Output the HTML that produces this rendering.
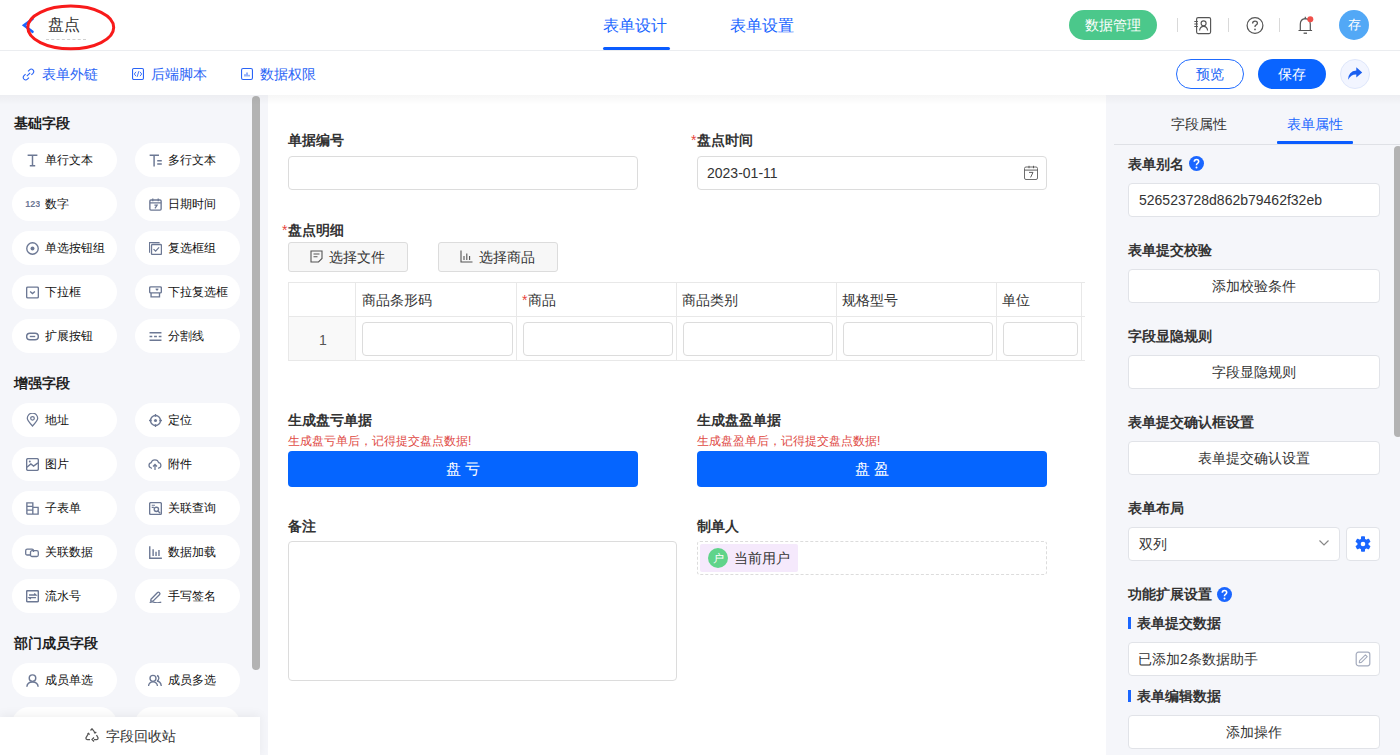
<!DOCTYPE html>
<html><head><meta charset="utf-8">
<style>
*{box-sizing:border-box;margin:0;padding:0}
html,body{width:1400px;height:755px;overflow:hidden;background:#fff;font-family:"Liberation Sans",sans-serif;color:#333}
.abs{position:absolute}
.t{position:absolute;white-space:nowrap;line-height:1}
/* header */
#hdr{position:absolute;left:0;top:0;width:1400px;height:51px;border-bottom:1px solid #ebedf0;background:#fff}
#tb{position:absolute;left:0;top:51px;width:1400px;height:44px;background:#fff}
#left{position:absolute;left:0;top:96px;width:268px;height:659px;background:#f5f6fa}
#center{position:absolute;left:268px;top:96px;width:838px;height:659px;background:#fff}
#right{position:absolute;left:1106px;top:96px;width:294px;height:659px;background:#f5f6fa}
#shadow{position:absolute;left:0;top:95px;width:1400px;height:10px;background:linear-gradient(rgba(0,0,0,0.035),rgba(0,0,0,0))}
.pill{position:absolute;width:105px;height:34px;border-radius:17px;background:#fff}
.pill .ic{position:absolute;left:14px;top:10.5px;width:13px;height:13px}
.pill span{position:absolute;left:33px;top:11px;font-size:12px;line-height:13px;color:#111;white-space:nowrap}
.sec{position:absolute;left:14px;font-size:14px;font-weight:bold;color:#1f1f1f;line-height:14px}
.lbl{position:absolute;font-size:14px;font-weight:bold;color:#333;line-height:14px;white-space:nowrap}
.req{color:#e8453c;font-weight:normal;padding-right:1px}
.inp{position:absolute;border:1px solid #dcdcdc;border-radius:4px;background:#fff}
.rlbl{position:absolute;left:1128px;font-size:14px;font-weight:bold;color:#333;line-height:14px;white-space:nowrap}
.rbtn{position:absolute;left:1128px;width:252px;height:34px;border:1px solid #e1e3e8;border-radius:4px;background:#fff;font-size:14px;color:#333;text-align:center;line-height:32px}
</style></head>
<body>
<div id="hdr">
<svg class="abs" style="left:21px;top:17px" width="14" height="17" viewBox="0 0 14 17"><path d="M11.5 2 L3 8.3 L11.5 14.8" fill="none" stroke="#1a66ff" stroke-width="2.6" stroke-linecap="round"/></svg>
<div class="t" style="left:48px;top:17px;font-size:16px;color:#333">盘点</div>
<div class="abs" style="left:46px;top:39px;width:40px;border-top:1px dashed #d0d0d0"></div>
<svg class="abs" style="left:20px;top:0px" width="100" height="54" viewBox="0 0 100 54"><ellipse cx="50.75" cy="27.45" rx="42.95" ry="21.35" fill="none" stroke="#f81a1a" stroke-width="3"/></svg>
<div class="t" style="left:603px;top:18px;font-size:16px;color:#1a66ff">表单设计</div>
<div class="abs" style="left:603px;top:47px;width:67px;height:3px;border-radius:2px;background:#0a5cff"></div>
<div class="t" style="left:730px;top:18px;font-size:16px;color:#1a66ff">表单设置</div>
<div class="abs" style="left:1069px;top:10px;width:88px;height:30px;border-radius:15px;background:#4bc88b;color:#fff;font-size:14px;line-height:30px;text-align:center">数据管理</div>
<div class="abs" style="left:1177px;top:18px;width:1px;height:14px;background:#d9d9d9"></div>
<div class="abs" style="left:1228px;top:18px;width:1px;height:14px;background:#d9d9d9"></div>
<div class="abs" style="left:1279px;top:18px;width:1px;height:14px;background:#d9d9d9"></div>
<svg class="abs" style="left:1193px;top:16px" width="19" height="19" viewBox="0 0 19 19"><rect x="3.6" y="1.6" width="14" height="16" rx="1.5" fill="none" stroke="#555" stroke-width="1.15"/><circle cx="10.6" cy="7.3" r="2.5" fill="none" stroke="#555" stroke-width="1.15"/><path d="M6.6 14.5 Q7 10.3 10.6 10.3 Q14.2 10.3 14.6 14.5" fill="none" stroke="#555" stroke-width="1.15"/><path d="M1.3 5.5h3.6M1.3 8h3.6M1.3 10.5h3.6" stroke="#555" stroke-width="1.1"/></svg>
<svg class="abs" style="left:1245px;top:16px" width="20" height="20" viewBox="0 0 20 20"><circle cx="10" cy="9.5" r="7.9" fill="none" stroke="#555" stroke-width="1.2"/><path d="M7.6 7.5 Q7.6 5.2 10 5.2 Q12.4 5.2 12.4 7.3 Q12.4 8.7 10.6 9.4 Q10 9.7 10 10.9" fill="none" stroke="#555" stroke-width="1.3"/><circle cx="10" cy="13.4" r="0.85" fill="#555"/></svg>
<svg class="abs" style="left:1296px;top:15px" width="20" height="21" viewBox="0 0 20 21"><path d="M4.3 15.5 L4.3 9.3 Q4.3 4 9.3 3.6 Q14.3 4 14.3 9.3 L14.3 15.5 Z M2.5 15.5 H16.1" fill="none" stroke="#555" stroke-width="1.2" stroke-linejoin="round"/><path d="M7.6 18.2 H11" stroke="#555" stroke-width="1.3"/><path d="M9.3 1.8 V3.6" stroke="#555" stroke-width="1.2"/><circle cx="14.3" cy="4.2" r="3" fill="#f0504a"/></svg>
<div class="abs" style="left:1339px;top:10px;width:30px;height:30px;border-radius:15px;background:#52a8f6;color:#fff;font-size:13px;line-height:30px;text-align:center">存</div>
</div>
<div id="tb">
<svg class="abs" style="left:22px;top:17px" width="13" height="13" viewBox="0 0 13 13"><path d="M4.8 8.2 L8.2 4.8" stroke="#2a64f6" stroke-width="1.1"/><path d="M6 3.4 L7.6 1.8 Q9.3 0.2 11 1.9 Q12.6 3.6 11 5.3 L9.4 6.9 M7 9.6 L5.4 11.2 Q3.7 12.8 2 11.1 Q0.4 9.4 2 7.7 L3.6 6.1" fill="none" stroke="#2a64f6" stroke-width="1.1"/></svg>
<div class="t" style="left:42px;top:16px;font-size:14px;color:#2a64f6">表单外链</div>
<svg class="abs" style="left:132px;top:17px" width="12" height="12" viewBox="0 0 12 12"><rect x="0.55" y="0.55" width="10.9" height="10.9" rx="1.2" fill="none" stroke="#2a64f6" stroke-width="1.1"/><path d="M4 3.8 L2.3 6 L4 8.2 M8 3.8 L9.7 6 L8 8.2 M6.8 3.2 L5.2 8.8" fill="none" stroke="#2a64f6" stroke-width="0.9"/></svg>
<div class="t" style="left:151px;top:16px;font-size:14px;color:#2a64f6">后端脚本</div>
<svg class="abs" style="left:241px;top:17px" width="12" height="12" viewBox="0 0 12 12"><rect x="0.55" y="0.55" width="10.9" height="10.9" rx="1.5" fill="none" stroke="#2a64f6" stroke-width="1.1"/><path d="M4 8.5 V6.2 M6 8.5 V4.5 M8 8.5 V6.8" fill="none" stroke="#2a64f6" stroke-width="1"/></svg>
<div class="t" style="left:260px;top:16px;font-size:14px;color:#2a64f6">数据权限</div>
<div class="abs" style="left:1176px;top:8px;width:68px;height:30px;border-radius:15px;border:1px solid #1f6bff;color:#2064f5;font-size:14px;line-height:28px;text-align:center">预览</div>
<div class="abs" style="left:1258px;top:8px;width:68px;height:30px;border-radius:15px;background:#0a64ff;color:#fff;font-size:14px;line-height:30px;text-align:center">保存</div>
<div class="abs" style="left:1340px;top:8px;width:30px;height:30px;border-radius:15px;background:#f2f5ff;border:1px solid #dfe7fb"></div>
<svg class="abs" style="left:1347px;top:15px" width="16" height="15" viewBox="0 0 16 15"><path d="M9.3 1.2 L15.2 6.6 L9.3 11.6 V8.6 Q4.2 8.3 1 13.8 Q1.4 5 9.3 4.4 Z" fill="#1a5ff0"/></svg>
</div>
<div id="left">
<div class="sec" style="top:20px">基础字段</div>
<div class="pill" style="left:12px;top:47px"><svg class="ic" viewBox="0 0 12 12"><path d="M1.5 1.2h9M6 1.2v9.6M3.5 10.8h5" fill="none" stroke="#6c7894" stroke-width="1.35"/></svg><span>单行文本</span></div>
<div class="pill" style="left:135px;top:47px"><svg class="ic" viewBox="0 0 12 12"><path d="M0.6 1.1h8.6M4.7 1.1v10.4M7.6 6.3h4.2M7.6 9.3h4.2" fill="none" stroke="#6c7894" stroke-width="1.35"/></svg><span>多行文本</span></div>
<div class="pill" style="left:12px;top:91px"><svg class="ic" style="width:16px;left:12px" viewBox="0 0 16 12"><text x="1.3" y="8" font-size="9" font-weight="bold" fill="#6c7894" font-family="Liberation Sans" textLength="15" lengthAdjust="spacingAndGlyphs">123</text></svg><span>数字</span></div>
<div class="pill" style="left:135px;top:91px"><svg class="ic" viewBox="0 0 12 12"><rect x="0.8" y="1.8" width="10.4" height="9.4" rx="1" fill="none" stroke="#6c7894" stroke-width="1.25"/><path d="M0.8 4.5h10.4M3.5 0.5v2.5M8.5 0.5v2.5M5 6.5h2.5L5.5 9.5" fill="none" stroke="#6c7894" stroke-width="1.15"/></svg><span>日期时间</span></div>
<div class="pill" style="left:12px;top:135px"><svg class="ic" viewBox="0 0 12 12"><circle cx="6" cy="6" r="5.3" fill="none" stroke="#6c7894" stroke-width="1.25"/><circle cx="6" cy="6" r="1.8" fill="#6c7894"/></svg><span>单选按钮组</span></div>
<div class="pill" style="left:135px;top:135px"><svg class="ic" viewBox="0 0 12 12"><path d="M0.3 10V0.5H9.8" fill="none" stroke="#6c7894" stroke-width="1.25"/><rect x="2.3" y="2.3" width="9.2" height="9.2" rx="1" fill="none" stroke="#6c7894" stroke-width="1.25"/><path d="M4.2 6.6l1.9 1.8 3.2-3.4" fill="none" stroke="#6c7894" stroke-width="1.2"/></svg><span>复选框组</span></div>
<div class="pill" style="left:12px;top:179px"><svg class="ic" viewBox="0 0 12 12"><rect x="0.6" y="1.1" width="10.8" height="9.8" rx="1" fill="none" stroke="#6c7894" stroke-width="1.25"/><path d="M3.8 5l2.2 2 2.2-2" fill="none" stroke="#6c7894" stroke-width="1.25"/></svg><span>下拉框</span></div>
<div class="pill" style="left:135px;top:179px"><svg class="ic" viewBox="0 0 12 12"><rect x="0.6" y="0.8" width="10.8" height="5.6" rx="1" fill="none" stroke="#6c7894" stroke-width="1.25"/><path d="M1.9 6.4v3.6h7.8V6.4" fill="none" stroke="#6c7894" stroke-width="1.25"/><path d="M6.3 2.5l1.1 1.3 1.1-1.3" fill="none" stroke="#6c7894" stroke-width="1.15"/></svg><span>下拉复选框</span></div>
<div class="pill" style="left:12px;top:223px"><svg class="ic" viewBox="0 0 12 12"><rect x="0.6" y="3" width="10.8" height="6" rx="3" fill="none" stroke="#6c7894" stroke-width="1.35"/><path d="M3.5 6h5" stroke="#6c7894" stroke-width="1.25"/></svg><span>扩展按钮</span></div>
<div class="pill" style="left:135px;top:223px"><svg class="ic" viewBox="0 0 12 12"><path d="M0.5 2.5h11M0.5 9.5h11" stroke="#6c7894" stroke-width="1.25"/><path d="M0.5 6h2.5M4.7 6h2.6M9 6h2.5" stroke="#6c7894" stroke-width="1.25"/></svg><span>分割线</span></div>
<div class="sec" style="top:280px">增强字段</div>
<div class="pill" style="left:12px;top:307px"><svg class="ic" style="top:10px;height:14px" viewBox="0 0 12 14"><path d="M6 13 Q0.8 7.5 0.8 5.3 A5.2 5.2 0 0 1 11.2 5.3 Q11.2 7.5 6 13Z" fill="none" stroke="#6c7894" stroke-width="1.25"/><circle cx="6" cy="5.3" r="1.8" fill="none" stroke="#6c7894" stroke-width="1.25"/></svg><span>地址</span></div>
<div class="pill" style="left:135px;top:307px"><svg class="ic" viewBox="0 0 12 12"><circle cx="6" cy="6" r="4.6" fill="none" stroke="#6c7894" stroke-width="1.25"/><circle cx="6" cy="6" r="1.4" fill="#6c7894"/><path d="M6 0v2.5M6 9.5V12M0 6h2.5M9.5 6H12" stroke="#6c7894" stroke-width="1.25"/></svg><span>定位</span></div>
<div class="pill" style="left:12px;top:351px"><svg class="ic" viewBox="0 0 12 12"><rect x="0.6" y="0.6" width="10.8" height="10.8" rx="1.2" fill="none" stroke="#6c7894" stroke-width="1.25"/><path d="M0.8 8.5 L4.5 5.5 L7 7.5 L11 4.5" fill="none" stroke="#6c7894" stroke-width="1.25"/><circle cx="3.5" cy="3.2" r="0.9" fill="#6c7894"/></svg><span>图片</span></div>
<div class="pill" style="left:135px;top:351px"><svg class="ic" style="width:14px;left:13px" viewBox="0 0 14 12"><path d="M4 9.5H3.2A2.7 2.7 0 0 1 3.2 4.2 A3.8 3.8 0 0 1 10.6 4.2 A2.7 2.7 0 0 1 10.8 9.5H10" fill="none" stroke="#6c7894" stroke-width="1.25"/><path d="M7 11.5V6M5 8l2-2 2 2" fill="none" stroke="#6c7894" stroke-width="1.25"/></svg><span>附件</span></div>
<div class="pill" style="left:12px;top:395px"><svg class="ic" viewBox="0 0 12 12"><path d="M0.8 11.2V0.8h5.5v10.4H0.8M0.8 4h5.5M0.8 7.5h5.5M6.3 5h4.9v6.2H6.3" fill="none" stroke="#6c7894" stroke-width="1.25"/></svg><span>子表单</span></div>
<div class="pill" style="left:135px;top:395px"><svg class="ic" viewBox="0 0 12 12"><rect x="0.6" y="0.6" width="10.8" height="10.8" rx="1" fill="none" stroke="#6c7894" stroke-width="1.25"/><path d="M2.5 3h3M2.5 5h2" stroke="#6c7894" stroke-width="1.15"/><circle cx="6.8" cy="6.8" r="2" fill="none" stroke="#6c7894" stroke-width="1.25"/><path d="M8.3 8.3l2 2" stroke="#6c7894" stroke-width="1.25"/></svg><span>关联查询</span></div>
<div class="pill" style="left:12px;top:439px"><svg class="ic" style="width:14px;left:13px" viewBox="0 0 14 12"><path d="M5.5 8.5H2.2Q0.7 8.5 0.7 7V4.2Q0.7 2.7 2.2 2.7H7Q8.5 2.7 8.5 4.2V5.6" fill="none" stroke="#6c7894" stroke-width="1.3"/><rect x="5.5" y="4.2" width="7.8" height="5.8" rx="1.5" fill="none" stroke="#6c7894" stroke-width="1.3"/></svg><span>关联数据</span></div>
<div class="pill" style="left:135px;top:439px"><svg class="ic" viewBox="0 0 12 12"><path d="M0.7 0.3v11h11.2M3.8 9.2V3M6.5 9.2V5.2M9.2 9.2V3.8" fill="none" stroke="#6c7894" stroke-width="1.3"/></svg><span>数据加载</span></div>
<div class="pill" style="left:12px;top:483px"><svg class="ic" viewBox="0 0 12 12"><rect x="0.6" y="0.6" width="10.8" height="10.3" rx="1" fill="none" stroke="#6c7894" stroke-width="1.35"/><path d="M2.8 4.6h6.4L7.6 3.2M9.2 7h-6.4l1.6 1.4" fill="none" stroke="#6c7894" stroke-width="1.2"/></svg><span>流水号</span></div>
<div class="pill" style="left:135px;top:483px"><svg class="ic" viewBox="0 0 12 12"><path d="M1.8 8.6 L7.9 2.3 Q8.6 1.6 9.4 2.3 L9.8 2.7 Q10.5 3.4 9.8 4.1 L3.7 10.3 H1.6Z" fill="none" stroke="#6c7894" stroke-width="1.2" stroke-linejoin="round"/><path d="M0.6 11.6 Q3 10.6 5 11.4 Q7.5 12.2 11.3 11.2" fill="none" stroke="#6c7894" stroke-width="1.1"/></svg><span>手写签名</span></div>
<div class="sec" style="top:540px">部门成员字段</div>
<div class="pill" style="left:12px;top:567px"><svg class="ic" viewBox="0 0 12 12"><circle cx="6" cy="3.8" r="3" fill="none" stroke="#6c7894" stroke-width="1.35"/><path d="M0.8 11.8 Q1.2 7.3 6 7.3 Q10.8 7.3 11.2 11.8" fill="none" stroke="#6c7894" stroke-width="1.35"/></svg><span>成员单选</span></div>
<div class="pill" style="left:135px;top:567px"><svg class="ic" style="width:14px;left:13px" viewBox="0 0 14 12"><circle cx="5" cy="3.8" r="3" fill="none" stroke="#6c7894" stroke-width="1.35"/><path d="M0.5 11.5 Q1 7.3 5 7.3 Q9 7.3 9.5 11.5M9 1 Q11 1.5 10.8 4 Q10.5 6 9 6.5 Q12.8 7 13.3 11.5" fill="none" stroke="#6c7894" stroke-width="1.35"/></svg><span>成员多选</span></div>
<div class="pill" style="left:12px;top:611px"><svg class="ic" viewBox="0 0 12 12"><circle cx="6" cy="3.8" r="3" fill="none" stroke="#6c7894" stroke-width="1.35"/><path d="M0.8 11.8 Q1.2 7.3 6 7.3 Q10.8 7.3 11.2 11.8" fill="none" stroke="#6c7894" stroke-width="1.35"/></svg><span></span></div>
<div class="pill" style="left:135px;top:611px"><svg class="ic" style="width:14px;left:13px" viewBox="0 0 14 12"><circle cx="5" cy="3.8" r="3" fill="none" stroke="#6c7894" stroke-width="1.35"/><path d="M0.5 11.5 Q1 7.3 5 7.3 Q9 7.3 9.5 11.5M9 1 Q11 1.5 10.8 4 Q10.5 6 9 6.5 Q12.8 7 13.3 11.5" fill="none" stroke="#6c7894" stroke-width="1.35"/></svg><span></span></div>
<div class="abs" style="left:252px;top:0px;width:8px;height:574px;border-radius:4px;background:#b3b3b3"></div>

<div class="abs" style="left:0;top:621px;width:260px;height:40px;background:#fff;box-shadow:0 -2px 10px rgba(0,0,0,0.06)"></div>
<svg class="abs" style="left:85px;top:632px" width="14" height="14" viewBox="0 0 14 14"><path d="M5.5 2.5 L7 0.8 L8.5 2.5 L10 5 M11.5 7 L13 9.8 Q13.2 11.5 11.5 11.5 H9 M5 11.5 H2.5 Q0.8 11.5 1 9.8 L3.5 5.5" fill="none" stroke="#555" stroke-width="1.25"/><path d="M9 9.5 L7 11.5 L9 13.5 M2.5 5.8 L3.6 5.3 L4.5 6.8 M9 4.5 L10 5 L11.3 4" fill="none" stroke="#555" stroke-width="1.25"/></svg>
<div class="t" style="left:106px;top:633px;font-size:14px;color:#333">字段回收站</div>
</div>
<div id="center">
<div class="lbl" style="left:20px;top:37px">单据编号</div>
<div class="inp" style="left:20px;top:60px;width:350px;height:34px;"></div>
<div class="lbl" style="left:423px;top:37px"><span class="req">*</span>盘点时间</div>
<div class="inp" style="left:429px;top:60px;width:350px;height:34px;"></div>
<div class="t" style="left:439px;top:70px;font-size:14px;color:#333">2023-01-11</div>
<svg class="abs" style="left:756px;top:69px" width="14" height="15" viewBox="0 0 14 15"><rect x="0.5" y="2" width="13" height="12.5" rx="1.5" fill="none" stroke="#666" stroke-width="0.95"/><path d="M0.5 5.1h13M5 0.8v2.4M9.5 0.8v2.4" stroke="#555" stroke-width="0.95"/><path d="M5 7.4h4L6.6 12.4" fill="none" stroke="#555" stroke-width="0.95"/></svg>
<div class="lbl" style="left:14px;top:127px"><span class="req">*</span>盘点明细</div>
<div class="abs" style="left:20px;top:146px;width:120px;height:30px;border:1px solid #dcdcdc;border-radius:3px;background:#f7f7f7"></div>
<svg class="abs" style="left:42px;top:154px" width="13" height="13" viewBox="0 0 13 13"><path d="M1 1h11v7.5L8.5 12H1Z" fill="none" stroke="#555" stroke-width="1.1"/><path d="M3.5 4h6M3.5 6.8h4" stroke="#555" stroke-width="1.1"/></svg>
<div class="t" style="left:61px;top:154px;font-size:14px;color:#333">选择文件</div>
<div class="abs" style="left:170px;top:146px;width:120px;height:30px;border:1px solid #dcdcdc;border-radius:3px;background:#f7f7f7"></div>
<svg class="abs" style="left:192px;top:154px" width="13" height="13" viewBox="0 0 13 13"><path d="M1 0.5v11.5h11.5M4 10V6M6.8 10V3.5M9.6 10V6" fill="none" stroke="#555" stroke-width="1.1"/></svg>
<div class="t" style="left:211px;top:154px;font-size:14px;color:#333">选择商品</div>
<div class="abs" style="left:20px;top:186px;width:797px;height:79px;border:1px solid #e8e8e8;border-right:none;overflow:hidden">
<div class="abs" style="left:0;top:34px;width:66px;height:43px;background:#f9f9f9"></div>
<div class="abs" style="left:66px;top:0;width:1px;height:77px;background:#e8e8e8"></div>
<div class="abs" style="left:227px;top:0;width:1px;height:77px;background:#e8e8e8"></div>
<div class="abs" style="left:387px;top:0;width:1px;height:77px;background:#e8e8e8"></div>
<div class="abs" style="left:547px;top:0;width:1px;height:77px;background:#e8e8e8"></div>
<div class="abs" style="left:707px;top:0;width:1px;height:77px;background:#e8e8e8"></div>
<div class="abs" style="left:792px;top:0;width:1px;height:77px;background:#e8e8e8"></div>
<div class="abs" style="left:0;top:33px;width:797px;height:1px;background:#e8e8e8"></div>
<div class="t" style="left:73px;top:10px;font-size:14px;color:#333">商品条形码</div>
<div class="inp" style="left:73px;top:39px;width:151px;height:34px"></div>
<div class="t" style="left:233px;top:10px;font-size:14px;color:#333"><span class="req">*</span>商品</div>
<div class="inp" style="left:234px;top:39px;width:150px;height:34px"></div>
<div class="t" style="left:393px;top:10px;font-size:14px;color:#333">商品类别</div>
<div class="inp" style="left:394px;top:39px;width:150px;height:34px"></div>
<div class="t" style="left:553px;top:10px;font-size:14px;color:#333">规格型号</div>
<div class="inp" style="left:554px;top:39px;width:150px;height:34px"></div>
<div class="t" style="left:713px;top:10px;font-size:14px;color:#333">单位</div>
<div class="inp" style="left:714px;top:39px;width:75px;height:34px"></div>
<div class="t" style="left:30px;top:50px;font-size:14px;color:#555">1</div>
</div>
<div class="lbl" style="left:20px;top:317px">生成盘亏单据</div>
<div class="lbl" style="left:429px;top:317px">生成盘盈单据</div>
<div class="t" style="left:20px;top:339px;font-size:12px;color:#e04b45">生成盘亏单后，记得提交盘点数据!</div>
<div class="abs" style="left:20px;top:355px;width:350px;height:36px;border-radius:4px;background:#0565ff;color:#fff;font-size:15px;line-height:36px;text-align:center">盘 亏</div>
<div class="t" style="left:429px;top:339px;font-size:12px;color:#e04b45">生成盘盈单后，记得提交盘点数据!</div>
<div class="abs" style="left:429px;top:355px;width:350px;height:36px;border-radius:4px;background:#0565ff;color:#fff;font-size:15px;line-height:36px;text-align:center">盘 盈</div>
<div class="lbl" style="left:20px;top:423px">备注</div>
<div class="inp" style="left:20px;top:445px;width:389px;height:140px;"></div>
<div class="lbl" style="left:429px;top:423px">制单人</div>
<div class="abs" style="left:429px;top:445px;width:350px;height:34px;border:1px dashed #dcdcdc;border-radius:3px"></div>
<div class="abs" style="left:432px;top:448px;width:98px;height:28px;background:#f5e9fc;border-radius:2px"></div>
<div class="abs" style="left:440px;top:452px;width:20px;height:20px;border-radius:10px;background:#5fd48a;color:#fff;font-size:11px;line-height:20px;text-align:center">户</div>
<div class="t" style="left:466px;top:455px;font-size:14px;color:#333">当前用户</div>
</div>
<div id="right">
<div class="t" style="left:65px;top:21px;font-size:14px;color:#333">字段属性</div>
<div class="t" style="left:181px;top:21px;font-size:14px;color:#1a66ff">表单属性</div>
<div class="abs" style="left:8px;top:48px;width:286px;height:1px;background:#dfe1e6"></div>
<div class="abs" style="left:171px;top:45px;width:76px;height:3px;border-radius:1px;background:#0a5cff"></div>
<div class="abs" style="left:288px;top:50px;width:8px;height:291px;border-radius:4px;background:#b3b3b3"></div>
<div class="t" style="left:22px;top:61px;font-size:14px;font-weight:bold;color:#333;line-height:14px">表单别名</div>
<svg class="abs" style="left:83px;top:60px" width="15" height="15" viewBox="0 0 15 15"><circle cx="7.5" cy="7.5" r="7.5" fill="#1a66ff"/><path d="M5.3 5.8 Q5.3 3.5 7.5 3.5 Q9.7 3.5 9.7 5.6 Q9.7 6.9 8.2 7.6 Q7.5 8 7.5 9.2" fill="none" stroke="#fff" stroke-width="1.6"/><circle cx="7.5" cy="11.4" r="1" fill="#fff"/></svg>
<div class="rbtn" style="left:22px;top:87px;height:34px;text-align:left;padding-left:10px;line-height:32px;font-size:14px">526523728d862b79462f32eb</div>
<div class="t" style="left:22px;top:147px;font-size:14px;font-weight:bold;color:#333;line-height:14px">表单提交校验</div>
<div class="rbtn" style="left:22px;top:173px;height:34px;line-height:32px">添加校验条件</div>
<div class="t" style="left:22px;top:233px;font-size:14px;font-weight:bold;color:#333;line-height:14px">字段显隐规则</div>
<div class="rbtn" style="left:22px;top:259px;height:34px;line-height:32px">字段显隐规则</div>
<div class="t" style="left:22px;top:319px;font-size:14px;font-weight:bold;color:#333;line-height:14px">表单提交确认框设置</div>
<div class="rbtn" style="left:22px;top:345px;height:34px;line-height:32px">表单提交确认设置</div>
<div class="t" style="left:22px;top:405px;font-size:14px;font-weight:bold;color:#333;line-height:14px">表单布局</div>
<div class="rbtn" style="left:22px;top:431px;width:212px;height:34px;text-align:left;padding-left:10px;line-height:32px">双列</div>
<svg class="abs" style="left:212px;top:443px" width="12" height="8" viewBox="0 0 12 8"><path d="M1.5 1.5 L6 6 L10.5 1.5" fill="none" stroke="#888" stroke-width="1.2"/></svg>
<div class="rbtn" style="left:240px;top:431px;width:34px;height:34px"></div>
<svg class="abs" style="left:249px;top:440px" width="16" height="16" viewBox="0 0 16 16"><circle cx="8" cy="8" r="5.6" fill="#1a66ff"/><rect x="6" y="0.3" width="4" height="4" rx="0.8" fill="#1a66ff" transform="rotate(0 8 8)"/><rect x="6" y="0.3" width="4" height="4" rx="0.8" fill="#1a66ff" transform="rotate(60 8 8)"/><rect x="6" y="0.3" width="4" height="4" rx="0.8" fill="#1a66ff" transform="rotate(120 8 8)"/><rect x="6" y="0.3" width="4" height="4" rx="0.8" fill="#1a66ff" transform="rotate(180 8 8)"/><rect x="6" y="0.3" width="4" height="4" rx="0.8" fill="#1a66ff" transform="rotate(240 8 8)"/><rect x="6" y="0.3" width="4" height="4" rx="0.8" fill="#1a66ff" transform="rotate(300 8 8)"/><circle cx="8" cy="8" r="2.3" fill="#fff"/></svg>
<div class="t" style="left:22px;top:491px;font-size:14px;font-weight:bold;color:#333;line-height:14px">功能扩展设置</div>
<svg class="abs" style="left:111px;top:491px" width="15" height="15" viewBox="0 0 15 15"><circle cx="7.5" cy="7.5" r="7.5" fill="#1a66ff"/><path d="M5.3 5.8 Q5.3 3.5 7.5 3.5 Q9.7 3.5 9.7 5.6 Q9.7 6.9 8.2 7.6 Q7.5 8 7.5 9.2" fill="none" stroke="#fff" stroke-width="1.6"/><circle cx="7.5" cy="11.4" r="1" fill="#fff"/></svg>
<div class="abs" style="left:22px;top:521px;width:3px;height:12px;background:#1a66ff"></div>
<div class="t" style="left:31px;top:520px;font-size:14px;font-weight:bold;color:#333;line-height:14px">表单提交数据</div>
<div class="rbtn" style="left:22px;top:546px;height:34px;text-align:left;padding-left:9px;line-height:32px">已添加2条数据助手</div>
<svg class="abs" style="left:249px;top:555px" width="16" height="16" viewBox="0 0 16 16"><rect x="1.2" y="1.2" width="13.6" height="13.6" rx="2.2" fill="none" stroke="#a4abbd" stroke-width="1.2"/><path d="M4.3 11.7 L4.6 9.6 L10.4 3.8 L12.2 5.6 L6.4 11.4 Z" fill="none" stroke="#a4abbd" stroke-width="1.1" stroke-linejoin="round"/></svg>
<div class="abs" style="left:22px;top:594px;width:3px;height:12px;background:#1a66ff"></div>
<div class="t" style="left:31px;top:593px;font-size:14px;font-weight:bold;color:#333;line-height:14px">表单编辑数据</div>
<div class="rbtn" style="left:22px;top:619px;height:34px;line-height:32px">添加操作</div>
</div>
<div class="abs" style="left:0;top:95px;width:268px;height:1px;background:#f5f6fa"></div><div class="abs" style="left:1106px;top:95px;width:294px;height:1px;background:#f5f6fa"></div>
<div id="shadow"></div>
</body></html>
